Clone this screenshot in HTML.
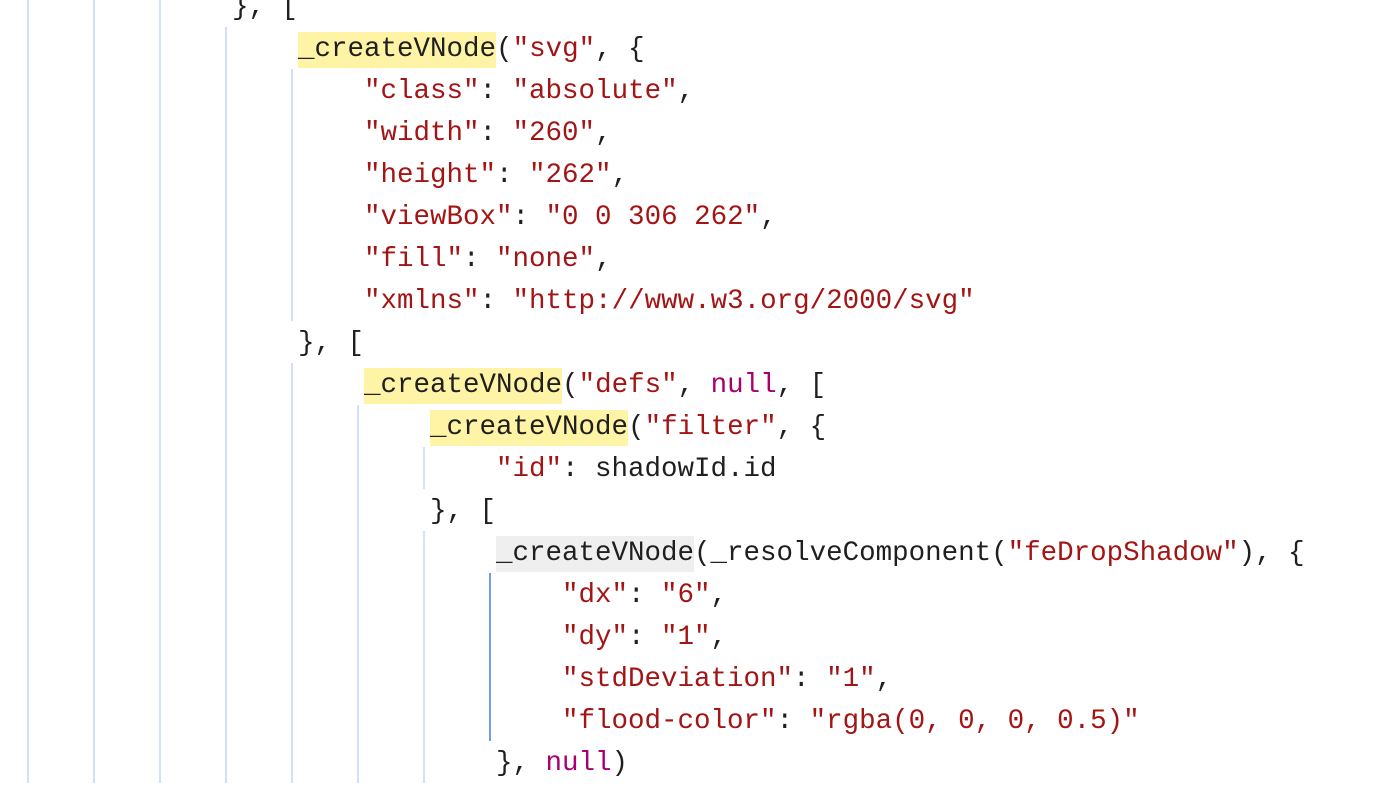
<!DOCTYPE html>
<html><head><meta charset="utf-8"><style>
html,body{margin:0;padding:0;background:#fff;width:1384px;height:785px;overflow:hidden}
#c{position:absolute;top:-15px;left:0;width:1384px}
.l{position:relative;height:42px;line-height:42px;font-family:"Liberation Mono",monospace;font-size:27.5px;color:#1f1f1f;white-space:pre}
.g{position:absolute;top:0;width:2px;height:42px;background:#d2e0fa}
.g.a{background:#6d9ef0}
.t{position:absolute;top:2px}
.s{color:#a31515}.k{color:#a8006e}
.h{background:#fff3a6;display:inline-block;line-height:36px}
.h2{background:#efefef;display:inline-block;line-height:36px}
</style></head><body><div id="c"></div>
<script>
var L=[
[3,'}, ['],
[4,'<span class="h">_createVNode</span>(<span class="s">"svg"</span>, {'],
[5,'<span class="s">"class"</span>: <span class="s">"absolute"</span>,'],
[5,'<span class="s">"width"</span>: <span class="s">"260"</span>,'],
[5,'<span class="s">"height"</span>: <span class="s">"262"</span>,'],
[5,'<span class="s">"viewBox"</span>: <span class="s">"0 0 306 262"</span>,'],
[5,'<span class="s">"fill"</span>: <span class="s">"none"</span>,'],
[5,'<span class="s">"xmlns"</span>: <span class="s">"http://www.w3.org/2000/svg"</span>'],
[4,'}, ['],
[5,'<span class="h">_createVNode</span>(<span class="s">"defs"</span>, <span class="k">null</span>, ['],
[6,'<span class="h">_createVNode</span>(<span class="s">"filter"</span>, {'],
[7,'<span class="s">"id"</span>: shadowId.id'],
[6,'}, ['],
[7,'<span class="h2">_createVNode</span>(_resolveComponent(<span class="s">"feDropShadow"</span>), {'],
[8,'<span class="s">"dx"</span>: <span class="s">"6"</span>,'],
[8,'<span class="s">"dy"</span>: <span class="s">"1"</span>,'],
[8,'<span class="s">"stdDeviation"</span>: <span class="s">"1"</span>,'],
[8,'<span class="s">"flood-color"</span>: <span class="s">"rgba(0, 0, 0, 0.5)"</span>'],
[7,'}, <span class="k">null</span>)']
];
var h='';
L.forEach(function(r){
 var s='<div class="l">';
 for(var c=0;c<r[0];c++){s+='<div class="g'+(c==7?' a':'')+'" style="left:'+(27+66*c)+'px"></div>';}
 s+='<span class="t" style="left:'+(34+66*r[0])+'px">'+r[1]+'</span></div>';
 h+=s;
});
document.getElementById('c').innerHTML=h;
</script></body></html>
